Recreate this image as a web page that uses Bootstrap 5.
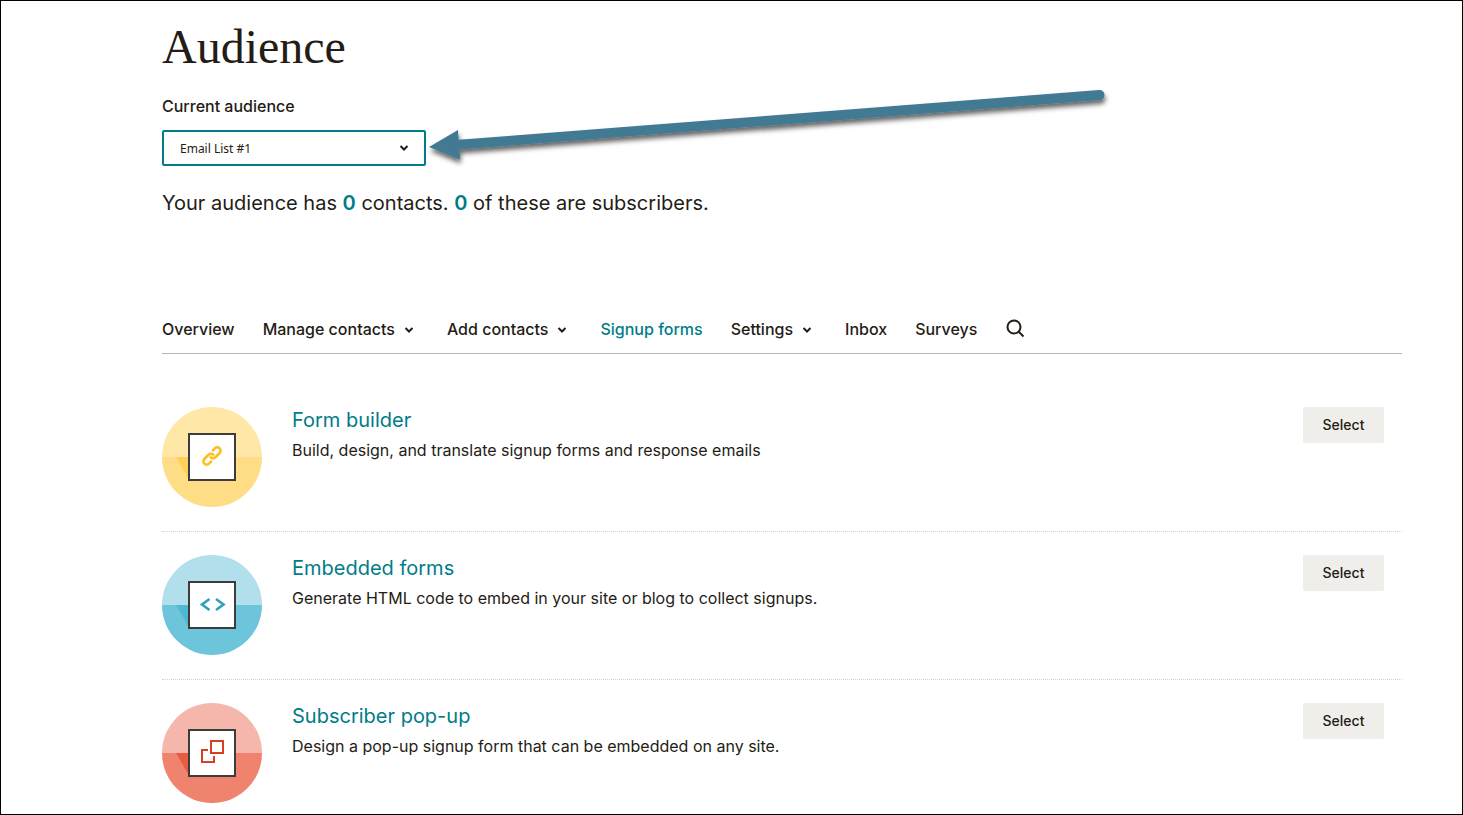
<!DOCTYPE html>
<html lang="en">
<head>
<meta charset="utf-8">
<meta name="viewport" content="width=device-width, initial-scale=1">
<title>Audience</title>
<link href="https://cdn.jsdelivr.net/npm/bootstrap@5.3.0/dist/css/bootstrap.min.css" rel="stylesheet">
<style>
  :root { --ink: #241c15; --teal: #007c89; }
  body { font-family: Inter, "Liberation Sans", sans-serif; font-size: 16px; line-height: 24px; color: var(--ink); background: #fff; }
  a { color: var(--teal); text-decoration: none; }
  .page-frame { min-height: 100vh; border: 1px solid #000; padding: 20px 60px 11px 161px; }
  .page-title { font-family: "Liberation Serif", serif; font-size: 48px; line-height: 52px; font-weight: 400; margin-bottom: 21px; }
  .audience-label { font-size: 16px; font-weight: 500; margin-bottom: 12px; line-height: 24px; }
  .audience-picker { width: 264px; }
  .audience-picker .form-select {
    height: 36px; border: 2px solid var(--teal); border-radius: 2px; padding: 1px 36px 0 16px;
    font-family: "Noto Sans", sans-serif; font-size: 12px; color: var(--ink);
    background-image: url("data:image/svg+xml,%3Csvg xmlns='http://www.w3.org/2000/svg' viewBox='0 0 10 8'%3E%3Cpath d='M1.5 2 5 5.5 8.5 2' fill='none' stroke='%23241c15' stroke-width='2'/%3E%3C/svg%3E");
    background-size: 10px 8px; background-position: right 15px center;
  }
  .pointer-arrow { left: 264px; top: -44px; pointer-events: none; }
  .summary { font-size: 20px; line-height: 30px; margin: 22px 0 99px; }
  .summary a { font-weight: 600; }
  .audience-tabs { gap: 0 28px; border-bottom: 1px solid #b5b5b5; padding-bottom: 12px; }
  .audience-tabs .nav-link { padding: 0; font-size: 16px; font-weight: 500; color: var(--ink); }
  .audience-tabs .nav-link.active { color: var(--teal); }
  .audience-tabs .nav-link svg { margin: 0 5px 2px 9px; }
  .audience-tabs .search-link svg { display: block; margin: 2px 0 0; }
  .options { margin-top: 29px; }
  .option-row { padding: 24px 18px 24px 0; gap: 30px; }
  .option-row + .option-row { border-top: 1px dotted #d0d0d0; padding-top: 23px; }
  .option-row:last-child { padding-bottom: 0; }
  .option-row h2 { font-size: 20px; line-height: 26px; font-weight: 400; margin: 0 0 5px; }
  .option-row p { margin: 0; }
  .option-row .btn { width: 81px; height: 36px; border: 0; border-radius: 2px; padding: 0; background: #efeeea; color: var(--ink); font-size: 14px; line-height: 20px; font-weight: 500; }
</style>
</head>
<body>
<main class="page-frame">
  <h1 class="page-title">Audience</h1>
  <label class="audience-label d-block" for="audience">Current audience</label>
  <div class="audience-picker position-relative">
    <select class="form-select" id="audience"><option>Email List #1</option></select>
    <svg class="pointer-arrow position-absolute" width="690" height="90" viewBox="426 86 690 90" aria-hidden="true">
      <defs><filter id="shade" x="-5%" y="-20%" width="110%" height="160%"><feDropShadow dx="1" dy="4" stdDeviation="2.500" flood-color="#000" flood-opacity=".6"/></filter></defs>
      <path filter="url(#shade)" fill="#427a94" d="M429 147 458 130 458.700 139.800 1099 90A5 5 0 0 1 1100 100L459.500 149.500 460 159.500Z"/>
    </svg>
  </div>
  <p class="summary">Your audience has <a href="#">0</a> contacts. <a href="#">0</a> of these are subscribers.</p>

  <nav class="nav audience-tabs" aria-label="Audience">
    <a class="nav-link" href="#">Overview</a>
    <a class="nav-link" href="#">Manage contacts<svg width="10" height="8" viewBox="0 0 10 8" fill="none" stroke="currentColor" stroke-width="2"><path d="M1.500 2 5 5.500 8.500 2"/></svg></a>
    <a class="nav-link" href="#">Add contacts<svg width="10" height="8" viewBox="0 0 10 8" fill="none" stroke="currentColor" stroke-width="2"><path d="M1.500 2 5 5.500 8.500 2"/></svg></a>
    <a class="nav-link active" href="#" aria-current="page">Signup forms</a>
    <a class="nav-link" href="#">Settings<svg width="10" height="8" viewBox="0 0 10 8" fill="none" stroke="currentColor" stroke-width="2"><path d="M1.500 2 5 5.500 8.500 2"/></svg></a>
    <a class="nav-link" href="#">Inbox</a>
    <a class="nav-link" href="#">Surveys</a>
    <a class="nav-link search-link" href="#" aria-label="Search"><svg width="20" height="20" viewBox="0 0 20 20" fill="none" stroke="currentColor" stroke-width="2"><circle cx="9" cy="8" r="6.500"/><path d="m13.500 12.500 5 5"/></svg></a>
  </nav>

  <section class="options">
    <article class="option-row d-flex align-items-start">
      <svg class="flex-shrink-0" width="100" height="100" viewBox="0 0 100 100" aria-hidden="true">
        <path fill="#ffe7a8" d="M0 50a50 50 0 0 1 100 0Z"/><path fill="#fedd86" d="M0 50a50 50 0 0 0 100 0Z"/>
        <path fill="#ffd057" d="M14 50h14v24Z"/><rect x="27" y="27" width="46" height="46" fill="#fff" stroke="#3c3c3c" stroke-width="2"/>
        <g transform="translate(50 49) rotate(-45)" fill="none" stroke="#fcbf1e" stroke-width="2.600"><path d="M-3.500 3.300H-7.500A3.300 3.300 0 0 1-7.500-3.300H-1.500A3.300 3.300 0 0 1 1.800 0V1"/><path d="M3.500-3.300H7.500A3.300 3.300 0 0 1 7.500 3.300H1.500A3.300 3.300 0 0 1-1.800 0V-1"/></g>
      </svg>
      <div class="flex-grow-1"><h2><a href="#">Form builder</a></h2><p>Build, design, and translate signup forms and response emails</p></div>
      <button class="btn" type="button">Select</button>
    </article>
    <article class="option-row d-flex align-items-start">
      <svg class="flex-shrink-0" width="100" height="100" viewBox="0 0 100 100" aria-hidden="true">
        <path fill="#b1dfeb" d="M0 50a50 50 0 0 1 100 0Z"/><path fill="#6dc5dc" d="M0 50a50 50 0 0 0 100 0Z"/>
        <path fill="#51b8d4" d="M14 50h14v24Z"/><rect x="27" y="27" width="46" height="46" fill="#fff" stroke="#3c3c3c" stroke-width="2"/>
        <path fill="none" stroke="#2f9fbd" stroke-width="2.600" d="m47.500 44-7.500 5.500 7.500 5.500M54 44l7.500 5.500-7.500 5.500"/>
      </svg>
      <div class="flex-grow-1"><h2><a href="#">Embedded forms</a></h2><p>Generate HTML code to embed in your site or blog to collect signups.</p></div>
      <button class="btn" type="button">Select</button>
    </article>
    <article class="option-row d-flex align-items-start">
      <svg class="flex-shrink-0" width="100" height="100" viewBox="0 0 100 100" aria-hidden="true">
        <path fill="#f5b6ab" d="M0 50a50 50 0 0 1 100 0Z"/><path fill="#ef836e" d="M0 50a50 50 0 0 0 100 0Z"/>
        <path fill="#e85c41" d="M14 50h14v24Z"/><rect x="27" y="27" width="46" height="46" fill="#fff" stroke="#3c3c3c" stroke-width="2"/>
        <path fill="none" stroke="#d83f25" stroke-width="2" d="M49 38h12v12H49ZM46 47h-6v12h12v-6"/>
      </svg>
      <div class="flex-grow-1"><h2><a href="#">Subscriber pop-up</a></h2><p>Design a pop-up signup form that can be embedded on any site.</p></div>
      <button class="btn" type="button">Select</button>
    </article>
  </section>
</main>
<script src="https://cdn.jsdelivr.net/npm/bootstrap@5.3.0/dist/js/bootstrap.bundle.min.js"></script>
</body>
</html>
